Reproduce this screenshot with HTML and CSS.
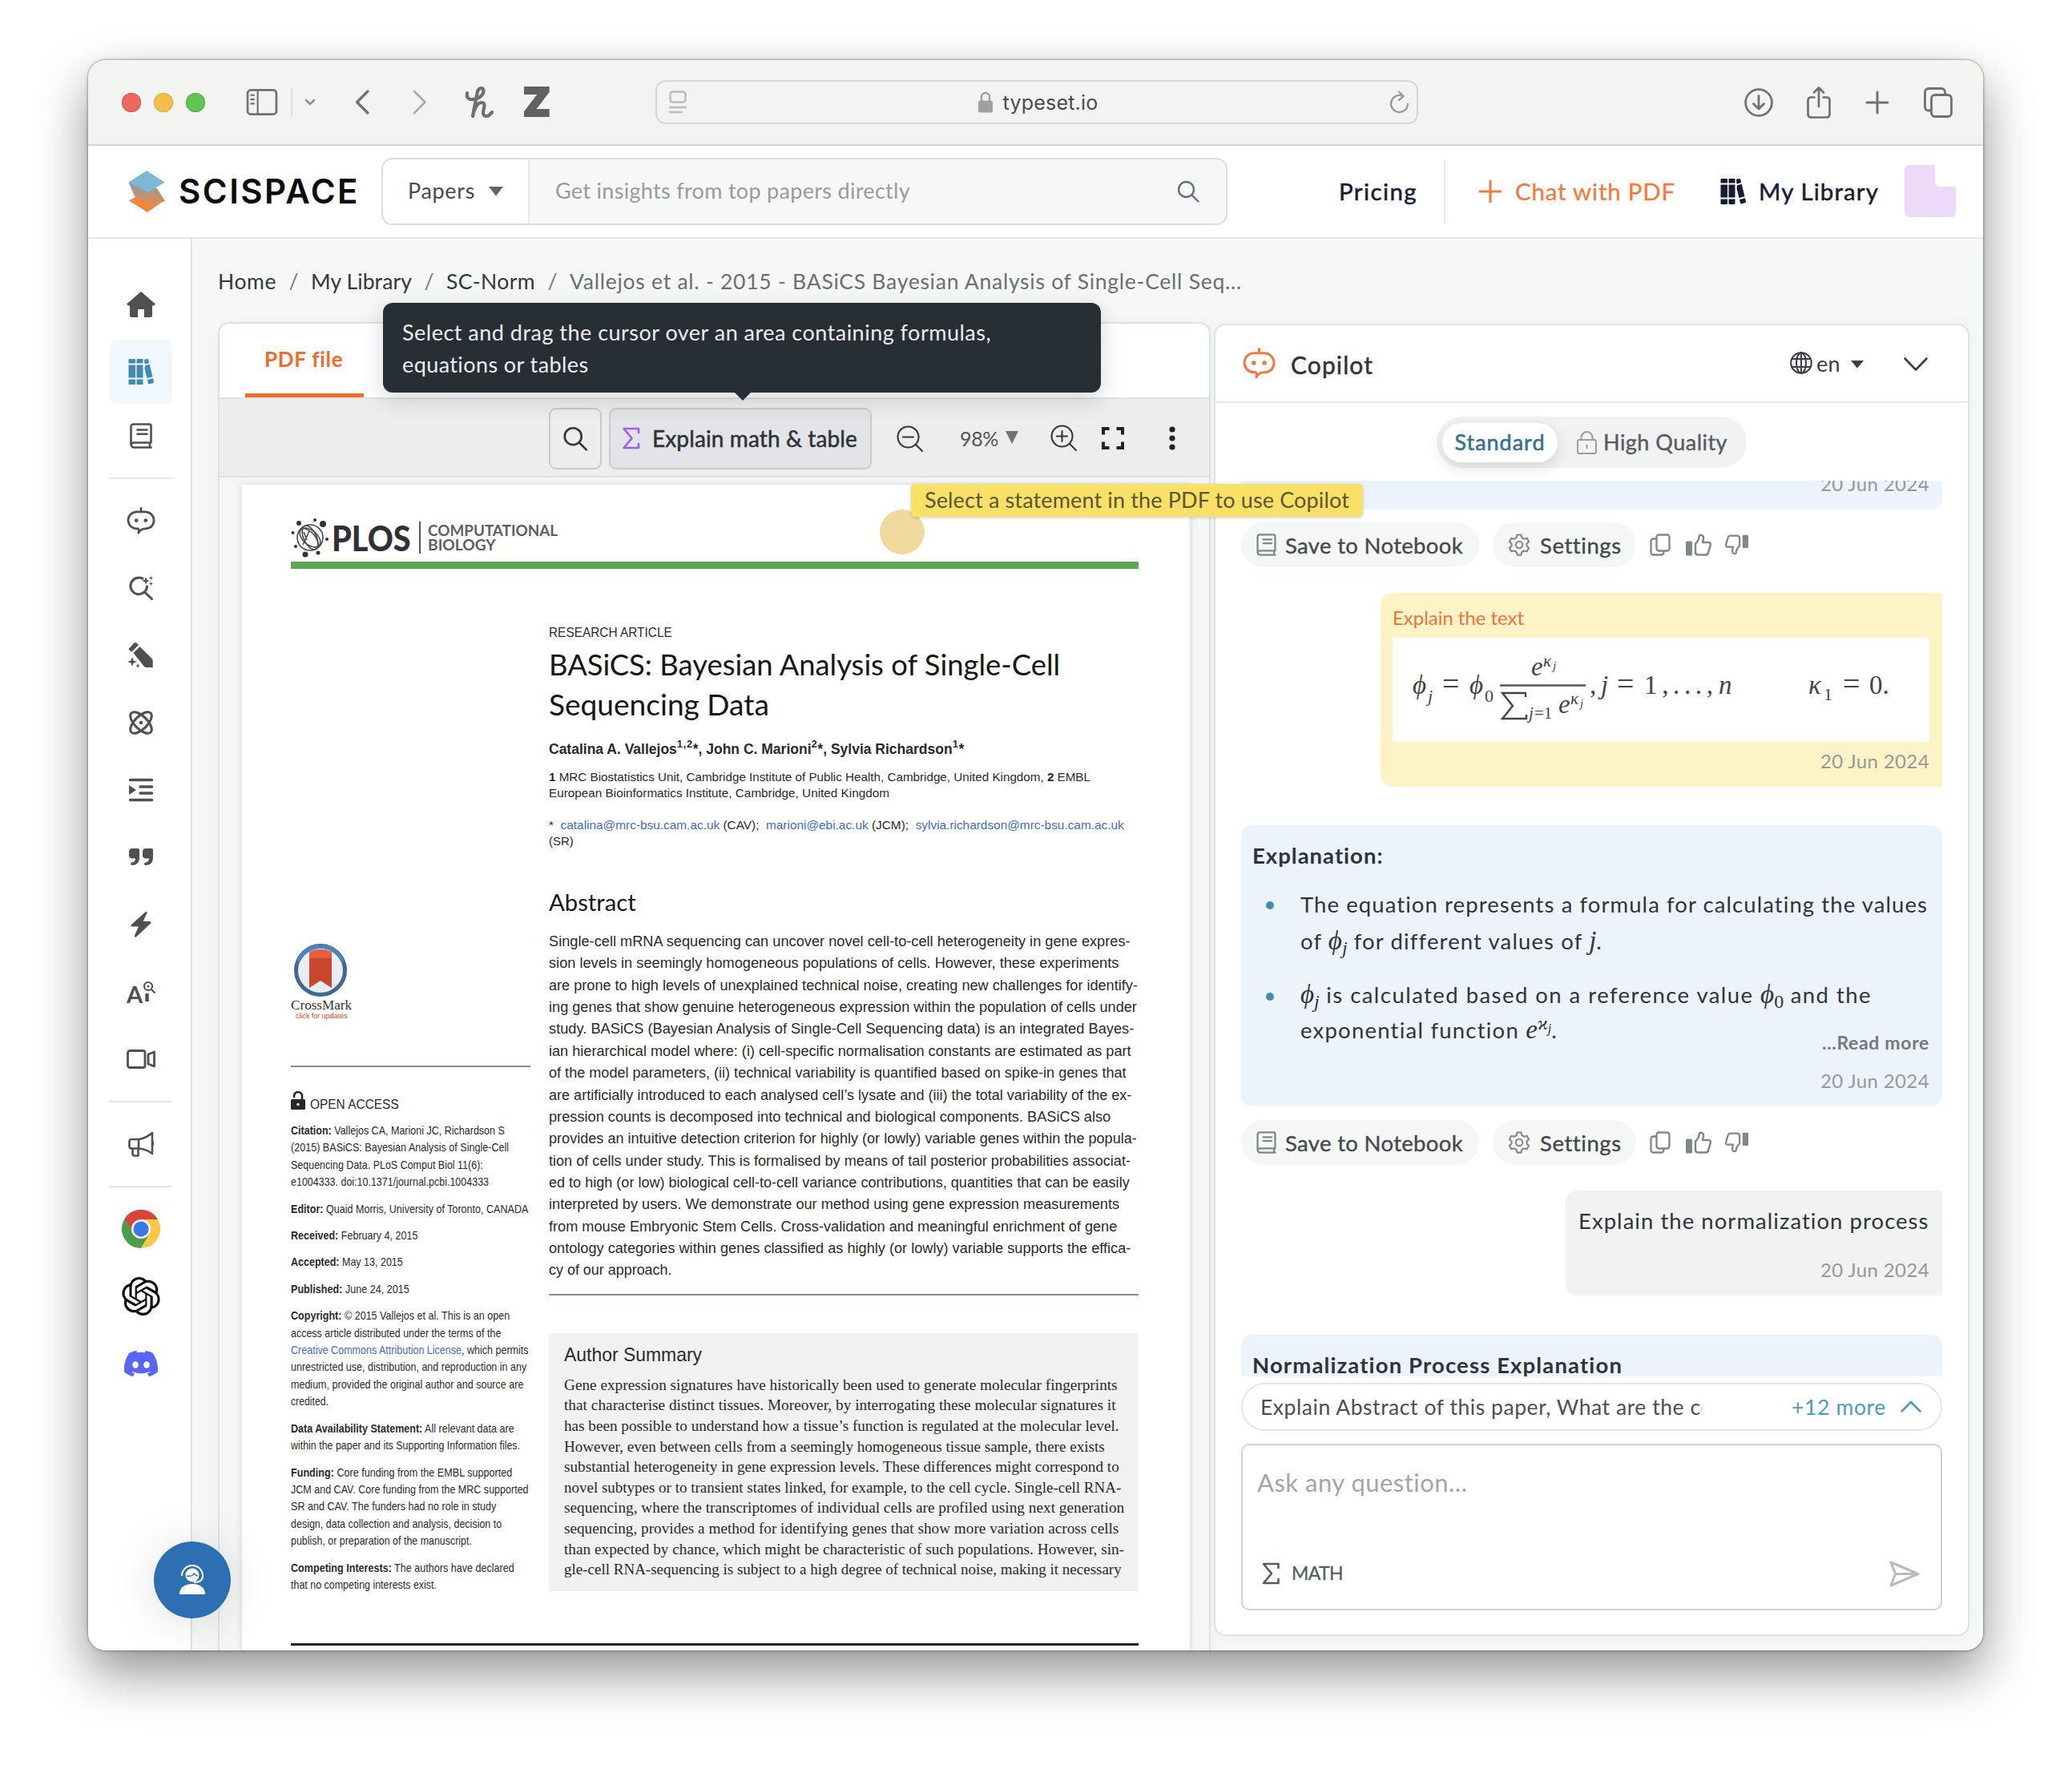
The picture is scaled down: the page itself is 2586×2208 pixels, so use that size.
FILE: index.html
```html
<!DOCTYPE html>
<html lang="en">
<head>
<meta charset="utf-8">
<title>SciSpace Copilot</title>
<link rel="stylesheet" href="styles.css">
</head>
<body>
<svg class="sprite" aria-hidden="true">
  <symbol id="i-search" viewBox="0 0 28 28"><g fill="none" stroke="currentColor" stroke-width="2.4" stroke-linecap="round"><circle cx="11.5" cy="11.5" r="9.5"/><path d="M18.5 18.5L26.5 26.5"/></g></symbol>
  <symbol id="i-books" viewBox="0 0 32 32"><g fill="currentColor"><path d="M1.500 0h6.500a1 1 0 0 1 1 1v4.500H.5V1a1 1 0 0 1 1-1zM.5 7.500H9v16H.5zM.5 25.500H9V31a1 1 0 0 1-1 1H1.500a1 1 0 0 1-1-1zM11.500 0h6a1 1 0 0 1 1 1v4.500h-8V1a1 1 0 0 1 1-1zM10.500 7.500h8v16h-8zM10.500 25.500h8V31a1 1 0 0 1-1 1h-6a1 1 0 0 1-1-1z"/><path d="M20 .8l3.800-.8a1.200 1.200 0 0 1 1.400.9l1 4-5.700 1.600zM21 8.300l5.700-1.500 3.800 15.400-7 1.900-3-12zM24 26l7-1.800 1 4.200a1.300 1.300 0 0 1-.9 1.500L26.500 31.500a1.200 1.200 0 0 1-1.500-.9z"/></g></symbol>
  <symbol id="i-note" viewBox="0 0 28 32"><g fill="none" stroke="currentColor" stroke-width="2.600" stroke-linejoin="round" stroke-linecap="round"><path d="M26.500 24.500V3.500a2 2 0 0 0-2-2H4.500a3 3 0 0 0-3 3v22a4 4 0 0 0 4 4h21M26 24.500H5a3 3 0 0 0-3.200 3M25 24.500v6M9.500 8.500h12M9.500 13.800h12"/></g></symbol>
  <symbol id="i-bot" viewBox="0 0 40 38"><g fill="none" stroke="currentColor" stroke-width="3" stroke-linejoin="round" stroke-linecap="round"><path d="M20 1.500v5M14 6.500h12a12 12 0 0 1 12 12c0 7-5 11.500-12 11.500-3 0-7 1-9.500 6 .6-2.500 1-4.500-.5-6H14A12 12 0 0 1 2 18.500a12 12 0 0 1 12-12z"/></g><g fill="currentColor"><circle cx="13.500" cy="18.500" r="2.700"/><circle cx="26.500" cy="18.500" r="2.700"/></g></symbol>
  <symbol id="i-gear" viewBox="0 0 28 28"><g fill="none" stroke="currentColor" stroke-width="2.100" stroke-linejoin="round"><path d="M11.600 1.500h4.800l1 3.600 2.700 1.600 3.600-.9 2.400 4.200-2.600 2.600v2.900l2.600 2.600-2.400 4.200-3.600-.9-2.700 1.600-1 3.600h-4.800l-1-3.600-2.700-1.600-3.600.9-2.400-4.200 2.600-2.600v-2.900L1.900 10l2.400-4.200 3.600.9 2.700-1.600z"/><circle cx="14" cy="14" r="4.200"/></g></symbol>
  <symbol id="i-copy" viewBox="0 0 26 28"><g fill="none" stroke="currentColor" stroke-width="2.300" stroke-linejoin="round"><rect x="8.500" y="1.500" width="16" height="20" rx="3"/><path d="M8.500 6.500h-4a3 3 0 0 0-3 3v14a3 3 0 0 0 3 3h10a3 3 0 0 0 3-3v-2"/></g></symbol>
  <symbol id="i-up" viewBox="0 0 32 28"><rect x="0" y="9.500" width="8" height="18" rx="1.500" fill="currentColor"/><path d="M12 12.500c4-3 4.500-6 5-10.200 2.500-1.500 5.500.2 5 4.200l-1 4.500h7.500c2 0 2.800 1.700 2.300 3.500l-3 10c-.5 1.500-1.500 2-3 2H16c-2 0-4-1-4-3z" fill="none" stroke="currentColor" stroke-width="2.500" stroke-linejoin="round"/></symbol>
  <symbol id="i-sigma" viewBox="0 0 24 28"><path d="M21 7V2H2.500l10 12L2.500 26H21v-5" fill="none" stroke="currentColor" stroke-width="2.600" stroke-linejoin="round" stroke-linecap="round"/></symbol>
</svg>

<div class="window">
  <div class="safari">
    <i class="light close"></i><i class="light minimise"></i><i class="light zoom"></i>
    <svg class="s-side" viewBox="0 0 40 34"><rect x="1.500" y="1.500" width="37" height="31" rx="4" fill="none" stroke="currentColor" stroke-width="2.800"/><path d="M14.500 1v32M5 8h5.500M5 13.500h5.500M5 19h5.500" stroke="currentColor" stroke-width="2.200"/></svg>
    <i class="s-div"></i>
    <svg class="s-chev" viewBox="0 0 14 9"><path d="M2 2l5 5 5-5" fill="none" stroke="currentColor" stroke-width="2.600" stroke-linecap="round" stroke-linejoin="round"/></svg>
    <svg class="s-back" viewBox="0 0 18 31"><path d="M16 2L2.500 15.500 16 29" fill="none" stroke="currentColor" stroke-width="3.200" stroke-linecap="round" stroke-linejoin="round"/></svg>
    <svg class="s-fwd" viewBox="0 0 18 31"><path d="M2 2l13.500 13.500L2 29" fill="none" stroke="currentColor" stroke-width="2.800" stroke-linecap="round" stroke-linejoin="round"/></svg>
    <svg class="s-honey" viewBox="0 0 35 39"><path d="M2 8c-1 6 2 9 8 8 8-1.500 13-6 12.500-11C22 1 17 1 15 6L9 37c2-10 6-17 11-17s3.500 5 2.500 9c-1.200 5 0 8 3.500 8 3 0 5-2 7-5" fill="none" stroke="currentColor" stroke-width="4.200" stroke-linecap="round" stroke-linejoin="round"/></svg>
    <span class="s-z">Z</span>
    <div class="address">
      <svg class="s-reader" viewBox="0 0 22 29"><rect x="1.500" y="1.500" width="19" height="13" rx="3" fill="none" stroke="currentColor" stroke-width="2.400"/><path d="M1 21h20M1 27h15" stroke="currentColor" stroke-width="2.400" stroke-linecap="round"/></svg>
      <svg class="s-lock" viewBox="0 0 18 27"><rect y="11.500" width="18" height="15" rx="2.500" fill="currentColor"/><path d="M4 12V7a5 5 0 0 1 10 0v5" fill="none" stroke="currentColor" stroke-width="2.400"/></svg>
      <span class="url" data-w="119">typeset.io</span>
      <svg class="s-reload" viewBox="0 0 24 29"><path d="M15.500 6.800A10.500 10.500 0 1 0 22 17M11 1.500l5.500 5.600-5.500 5" fill="none" stroke="currentColor" stroke-width="2.300" stroke-linecap="round" stroke-linejoin="round"/></svg>
    </div>
    <svg class="s-down" viewBox="0 0 36 36"><g fill="none" stroke="currentColor" stroke-width="2.700" stroke-linecap="round" stroke-linejoin="round"><circle cx="18" cy="18" r="16.400"/><path d="M18 9.500v16M11.500 19.500l6.500 6.500 6.500-6.500"/></g></svg>
    <svg class="s-share" viewBox="0 0 30 40"><g fill="none" stroke="currentColor" stroke-width="2.700" stroke-linecap="round" stroke-linejoin="round"><path d="M9.500 13.500H5a3.500 3.500 0 0 0-3.500 3.500v18A3.500 3.500 0 0 0 5 38.500h20a3.500 3.500 0 0 0 3.500-3.500V17a3.500 3.500 0 0 0-3.500-3.500h-4.500M15 25V2M9 7.500L15 1.500l6 6"/></g></svg>
    <svg class="s-plus" viewBox="0 0 28 28"><path d="M14 1v26M1 14h26" stroke="currentColor" stroke-width="2.900" stroke-linecap="round"/></svg>
    <svg class="s-tabs" viewBox="0 0 36 38"><g fill="none" stroke="currentColor" stroke-width="2.800" stroke-linejoin="round"><rect x="9.500" y="9.500" width="25" height="27" rx="4.500"/><path d="M26.500 9.500V6A4.500 4.500 0 0 0 22 1.500H6A4.500 4.500 0 0 0 1.500 6v18.500A4.500 4.500 0 0 0 6 29h3.500"/></g></svg>
  </div>

  <header class="topbar">
    <svg class="logo" viewBox="0 0 46 52"><defs><linearGradient id="lg" x1="0" y1="0" x2="0" y2="1"><stop offset="0" stop-color="#8a9da0"/><stop offset="1" stop-color="#e58a4c"/></linearGradient></defs><path d="M1 37.500L20 26l26 10.500L24 52z" fill="#f0863f"/><path d="M.5 14.500L36 22l10 16-15 5.500L8 32z" fill="url(#lg)"/><path d="M.5 14.500L23 0l22.500 14.500-21 13z" fill="#7db9d5"/></svg>
    <span class="brand" data-w="226">SCISPACE</span>
    <div class="search">
      <div class="scope"><span data-w="84">Papers</span><svg class="tri" viewBox="0 0 18 12"><path d="M0 0h18L9 11.500z" fill="currentColor"/></svg></div>
      <span class="hint" data-w="443">Get insights from top papers directly</span>
      <svg class="mag"><use href="#i-search"/></svg>
    </div>
    <span class="pricing" data-w="98">Pricing</span>
    <i class="t-div"></i>
    <svg class="cplus" viewBox="0 0 28 28"><path d="M14 0v28M0 14h28" stroke="currentColor" stroke-width="3"/></svg>
    <span class="cwp" data-w="200">Chat with PDF</span>
    <svg class="lib"><use href="#i-books"/></svg>
    <span class="mylib" data-w="150">My Library</span>
    <svg class="avatar" viewBox="0 0 64 65"><path d="M6 0h32v21a6 6 0 0 0 6 6h20v32a6 6 0 0 1-6 6H6a6 6 0 0 1-6-6V6a6 6 0 0 1 6-6z" fill="#edd9f8"/></svg>
  </header>

  <div class="body">
    <nav class="rail">
      <a><svg width="36" height="32" viewBox="0 0 36 32"><path d="M18 0L36 15.500 34 17.500H32V30a2 2 0 0 1-2 2h-8V22h-8v10H6a2 2 0 0 1-2-2V17.500H2L0 15.500z" fill="currentColor"/></svg></a>
      <a class="on"><b><svg width="32" height="32"><use href="#i-books"/></svg></b></a>
      <a class="nb"><svg width="28" height="32"><use href="#i-note"/></svg></a>
      <hr class="first">
      <a><svg width="36" height="34"><use href="#i-bot"/></svg></a>
      <a><svg width="30" height="30" viewBox="0 0 30 30"><path d="M17 3.200A10.300 10.300 0 1 0 22.500 13M19.500 20l9 8.500" fill="none" stroke="currentColor" stroke-width="3" stroke-linecap="round"/><path d="M21 1l1.300 3.700L26 6l-3.700 1.300L21 11l-1.300-3.700L16 6l3.700-1.300zM27.500 0l.7 1.800 1.800.7-1.800.7-.7 1.800-.7-1.800-1.800-.7 1.800-.7zM27.500 7l.7 1.800 1.800.7-1.800.7-.7 1.800-.7-1.800-1.800-.7 1.800-.7z" fill="currentColor"/></svg></a>
      <a><svg width="32" height="32" viewBox="0 0 32 32"><g fill="currentColor"><path d="M1 7.500L7 1a3 3 0 0 1 4 0l2 2-8.500 8.500L1.500 9.500a1.500 1.500 0 0 1-.5-2zM6.500 13l8-8L29.500 20a4 4 0 0 1 1.200 2.800V31h-7.500A4 4 0 0 1 20 30z"/><path d="M5 18l1.600 4.400L11 24l-4.400 1.600L5 30l-1.600-4.400L-1 24l4.400-1.600zM12 26l.8 2.200L15 29l-2.200.8L12 32l-.8-2.200L9 29l2.200-.8z"/></g></svg></a>
      <a><svg width="30" height="30" viewBox="0 0 30 30"><g fill="none" stroke="currentColor" stroke-width="3"><ellipse cx="15" cy="15" rx="17" ry="8" transform="rotate(45 15 15)"/><ellipse cx="15" cy="15" rx="17" ry="8" transform="rotate(-45 15 15)"/></g><circle cx="15" cy="15" r="2.300" fill="currentColor"/></svg></a>
      <a><svg width="30" height="30" viewBox="0 0 30 30"><path d="M1.500 2.500h27M14 11h14.500M14 19h14.500M1.500 27.500h27" stroke="currentColor" stroke-width="3.400" stroke-linecap="round"/><path d="M0 9l9 6-9 6z" fill="currentColor"/></svg></a>
      <a><svg width="30" height="22" viewBox="0 0 30 22"><g fill="currentColor"><path d="M4 0h7a2 2 0 0 1 2 2v9c0 7-4 10-9.500 10-1.500 0-2-3.300 0-3.500 3-.3 4.500-2 4.500-5H4a4 4 0 0 1-4-4V4a4 4 0 0 1 4-4z"/><path d="M21 0h7a2 2 0 0 1 2 2v9c0 7-4 10-9.500 10-1.500 0-2-3.300 0-3.500 3-.3 4.500-2 4.500-5h-4a4 4 0 0 1-4-4V4a4 4 0 0 1 4-4z"/></g></svg></a>
      <a><svg width="26" height="32" viewBox="0 0 26 32"><path d="M20.500 1.500L15.500 12H24c1.500 0 2 1.500 1 2.500L7.500 31c-1.500 1.500-3.200.3-2.500-1.500L10 18.500H2c-1.500 0-2-1.500-1-2.500L18 .7c1.500-1.300 3.200-.7 2.500.8z" fill="currentColor"/></svg></a>
      <a class="ai"><span>A</span><svg width="16" height="26" viewBox="0 0 16 26"><circle cx="7" cy="7" r="5" fill="none" stroke="currentColor" stroke-width="2.200"/><path d="M11 11l4.500 4.500" stroke="currentColor" stroke-width="2.200"/><circle cx="7" cy="7" r="1.500" fill="currentColor"/><path d="M5.500 16v10" stroke="currentColor" stroke-width="4.500"/></svg></a>
      <a><svg width="36" height="24" viewBox="0 0 36 24"><g fill="none" stroke="currentColor" stroke-width="2.800" stroke-linejoin="round"><rect x="1.500" y="1.500" width="21.500" height="21" rx="2.500"/><path d="M34.500 3v18l-7.500-3V6z"/></g></svg></a>
      <hr>
      <a><svg width="32" height="32" viewBox="0 0 32 32"><g fill="none" stroke="currentColor" stroke-width="2.600" stroke-linejoin="round"><path d="M30 2v26C24 23 19 22 13 21.500H4A2.500 2.500 0 0 1 1.500 19v-6.500A2.500 2.500 0 0 1 4 10h9C19 9.500 24 7 30 2zM13 10v11.500M5.500 21.500V28a2.500 2.500 0 0 0 2.500 2.500h4.500V21.500"/><path d="M30.700 12.500v5"/></g></svg></a>
      <hr>
      <a><svg width="48" height="48" viewBox="0 0 48 48"><path d="M24 24L3.200 12A24 24 0 0 1 44.800 12z" fill="#d8453a"/><path d="M44.800 12H24L34 30 24 48A24 24 0 0 0 44.800 12z" fill="#f6c748"/><path d="M3.200 12A24 24 0 0 0 24 48L34.400 30 24 24 13.600 30z" fill="#4a9c4f"/><path d="M3.200 12A24 24 0 0 1 44.800 12H24L13.600 18v12z" fill="#d8453a"/><path d="M3.200 12l10.400 18-3-9z" fill="#4a9c4f"/><circle cx="24" cy="24" r="12" fill="#fff"/><circle cx="24" cy="24" r="9.600" fill="#3c78e2"/></svg></a>
      <a class="dark"><svg width="48" height="48" viewBox="0 0 24 24"><path fill="currentColor" d="M22.2819 9.8211a5.9847 5.9847 0 0 0-.5157-4.9108 6.0462 6.0462 0 0 0-6.5098-2.9A6.0651 6.0651 0 0 0 4.9807 4.1818a5.9847 5.9847 0 0 0-3.9977 2.9 6.0462 6.0462 0 0 0 .7427 7.0966 5.98 5.98 0 0 0 .511 4.9107 6.051 6.051 0 0 0 6.5146 2.9001A5.9847 5.9847 0 0 0 13.2599 24a6.0557 6.0557 0 0 0 5.7718-4.2058 5.9894 5.9894 0 0 0 3.9977-2.9001 6.0557 6.0557 0 0 0-.7475-7.0729zm-9.022 12.6081a4.4755 4.4755 0 0 1-2.8764-1.0408l.1419-.0804 4.7783-2.7582a.7948.7948 0 0 0 .3927-.6813v-6.7369l2.02 1.1686a.071.071 0 0 1 .038.052v5.5826a4.504 4.504 0 0 1-4.4945 4.4944zm-9.6607-4.1254a4.4708 4.4708 0 0 1-.5346-3.0137l.142.0852 4.783 2.7582a.7712.7712 0 0 0 .7806 0l5.8428-3.3685v2.3324a.0804.0804 0 0 1-.0332.0615L9.74 19.9502a4.4992 4.4992 0 0 1-6.1408-1.6464zM2.3408 7.8956a4.485 4.485 0 0 1 2.3655-1.9728V11.6a.7664.7664 0 0 0 .3879.6765l5.8144 3.3543-2.0201 1.1685a.0757.0757 0 0 1-.071 0l-4.8303-2.7865A4.504 4.504 0 0 1 2.3408 7.872zm16.5963 3.8558L13.1038 8.364 15.1192 7.2a.0757.0757 0 0 1 .071 0l4.8303 2.7913a4.4944 4.4944 0 0 1-.6765 8.1042v-5.6772a.79.79 0 0 0-.407-.667zm2.0107-3.0231l-.142-.0852-4.7735-2.7818a.7759.7759 0 0 0-.7854 0L9.409 9.2297V6.8974a.0662.0662 0 0 1 .0284-.0615l4.8303-2.7866a4.4992 4.4992 0 0 1 6.6802 4.66zM8.3065 12.863l-2.02-1.1638a.0804.0804 0 0 1-.038-.0567V6.0742a4.4992 4.4992 0 0 1 7.3757-3.4537l-.142.0805L8.704 5.459a.7948.7948 0 0 0-.3927.6813zm1.0976-2.3654l2.602-1.4998 2.6069 1.4998v2.9994l-2.5974 1.4997-2.6067-1.4997Z"/></svg></a>
      <a class="discord"><svg width="42" height="42" viewBox="0 0 24 24"><path fill="currentColor" d="M20.317 4.3698a19.7913 19.7913 0 00-4.8851-1.5152.0741.0741 0 00-.0785.0371c-.211.3753-.4447.8648-.6083 1.2495-1.8447-.2762-3.68-.2762-5.4868 0-.1636-.3933-.4058-.8742-.6177-1.2495a.077.077 0 00-.0785-.037 19.7363 19.7363 0 00-4.8852 1.515.0699.0699 0 00-.0321.0277C.5334 9.0458-.319 13.5799.0992 18.0578a.0824.0824 0 00.0312.0561c2.0528 1.5076 4.0413 2.4228 5.9929 3.0294a.0777.0777 0 00.0842-.0276c.4616-.6304.8731-1.2952 1.226-1.9942a.076.076 0 00-.0416-.1057c-.6528-.2476-1.2743-.5495-1.8722-.8923a.077.077 0 01-.0076-.1277c.1258-.0943.2517-.1923.3718-.2914a.0743.0743 0 01.0776-.0105c3.9278 1.7933 8.18 1.7933 12.0614 0a.0739.0739 0 01.0785.0095c.1202.099.246.1981.3728.2924a.077.077 0 01-.0066.1276 12.2986 12.2986 0 01-1.873.8914.0766.0766 0 00-.0407.1067c.3604.698.7719 1.3628 1.225 1.9932a.076.076 0 00.0842.0286c1.961-.6067 3.9495-1.5219 6.0023-3.0294a.077.077 0 00.0313-.0552c.5004-5.177-.8382-9.6739-3.5485-13.6604a.061.061 0 00-.0312-.0286zM8.02 15.3312c-1.1825 0-2.1569-1.0857-2.1569-2.419 0-1.3332.9555-2.4189 2.157-2.4189 1.2108 0 2.1757 1.0952 2.1568 2.419 0 1.3332-.9555 2.4189-2.1569 2.4189zm7.9748 0c-1.1825 0-2.1569-1.0857-2.1569-2.419 0-1.3332.9554-2.4189 2.1569-2.4189 1.2108 0 2.1757 1.0952 2.1568 2.419 0 1.3332-.946 2.4189-2.1568 2.4189Z"/></svg></a>
    </nav>

    <main class="main">
      <div class="crumbs">
        <span data-w="73">Home</span><em>/</em><span data-w="126">My Library</span><em>/</em><span data-w="111">SC-Norm</span><em>/</em><span class="here" data-w="839">Vallejos et al. - 2015 - BASiCS Bayesian Analysis of Single-Cell Seq...</span>
      </div>
      <div class="panels">
        <section class="pdf">
          <div class="tabs"><span class="tab"><span data-w="98">PDF file</span></span></div>
          <div class="tools">
            <span class="btn find"><svg width="32" height="31"><use href="#i-search"/></svg></span>
            <span class="btn explain"><svg width="24" height="28"><use href="#i-sigma"/></svg><span data-w="256">Explain math &amp; table</span>
              <span class="tooltip"><span data-w="735">Select and drag the cursor over an area containing formulas,</span><br><span data-w="233">equations or tables</span></span>
            </span>
            <svg class="zo" viewBox="0 0 33 33"><g fill="none" stroke="currentColor" stroke-width="2.100" stroke-linecap="round"><circle cx="14.500" cy="14.500" r="13"/><path d="M24 24l8 8M8 14.500h13"/></g></svg>
            <span class="pct" data-w="48">98%</span>
            <svg class="ptri" viewBox="0 0 16 16"><path d="M0 0h16L8 16z" fill="currentColor"/></svg>
            <svg class="zi" viewBox="0 0 33 33"><g fill="none" stroke="currentColor" stroke-width="2.100" stroke-linecap="round"><circle cx="14.500" cy="14.500" r="13"/><path d="M24 24l8 8M8 14.500h13M14.500 8v13"/></g></svg>
            <svg class="fs" viewBox="0 0 28 28"><path d="M2 9.500V2h7.500M18.500 2H26v7.500M26 18.500V26h-7.500M9.500 26H2v-7.500" fill="none" stroke="currentColor" stroke-width="4"/></svg>
            <svg class="dots" viewBox="0 0 8 30"><g fill="currentColor"><circle cx="4" cy="4" r="3.600"/><circle cx="4" cy="15" r="3.600"/><circle cx="4" cy="26" r="3.600"/></g></svg>
          </div>
          <div class="canvas">
            <article class="page">
              <div class="plos">
                <svg width="50" height="50" viewBox="0 0 50 50"><g fill="none" stroke="#4a4b50" stroke-width="1.600"><circle cx="24" cy="25" r="16"/><ellipse cx="24" cy="25" rx="8" ry="16" transform="rotate(-25 24 25)"/><ellipse cx="24" cy="25" rx="15" ry="9" transform="rotate(40 24 25)"/><path d="M14 13c12 2 20 12 21 24M15 34l8-17M20 28l-4-10"/></g><g fill="#333"><circle cx="10" cy="7" r="3"/><circle cx="30" cy="3" r="2"/><circle cx="40" cy="8" r="4"/><circle cx="2.500" cy="19" r="2"/><circle cx="45" cy="27" r="2"/><circle cx="6" cy="36" r="2"/><circle cx="18" cy="46" r="3.500"/><circle cx="34" cy="44" r="2.500"/></g></svg>
                <span class="plos-w pl" data-w="99">PLOS</span><i></i>
                <div class="cb"><span class="pl" data-w="162">COMPUTATIONAL</span><span class="pl" data-w="85">BIOLOGY</span></div>
              </div>
              <div class="band"></div>
              <div class="cols">
                <aside>
                  <svg class="cm" viewBox="0 0 66 66"><circle cx="33" cy="33" r="30.500" fill="#e9edf1" stroke="#41688f" stroke-width="5"/><path d="M5 22A30.500 30.500 0 0 1 61 22" fill="none" stroke="#4b83c0" stroke-width="5"/><path d="M19 10q14-6 28 0v45L33 46 19 55z" fill="#c9452b"/><path d="M19 10q14-6 28 0v8H19z" fill="#e2603c"/></svg>
                  <span class="cmt pl" data-w="76">CrossMark</span>
                  <span class="cmu pl" data-w="65">click for updates</span>
                  <div class="rule"></div>
                  <div class="oa"><svg width="18" height="24" viewBox="0 0 18 24"><rect y="11" width="18" height="13" rx="1.500" fill="#26272c"/><path d="M4 9V7a5 5 0 0 1 10 0v5" fill="none" stroke="#26272c" stroke-width="2.600"/><circle cx="9" cy="17.500" r="1.800" fill="#ddd"/></svg><span class="pl" data-w="111">OPEN ACCESS</span></div>
                  <p><span class="pl" data-w="267"><b>Citation:</b> Vallejos CA, Marioni JC, Richardson S</span><span class="pl" data-w="272">(2015) BASiCS: Bayesian Analysis of Single-Cell</span><span class="pl" data-w="240">Sequencing Data. PLoS Comput Biol 11(6):</span><span class="pl" data-w="247">e1004333. doi:10.1371/journal.pcbi.1004333</span></p>
                  <p><span class="pl" data-w="296"><b>Editor:</b> Quaid Morris, University of Toronto, CANADA</span></p>
                  <p><span class="pl" data-w="158"><b>Received:</b> February 4, 2015</span></p>
                  <p><span class="pl" data-w="140"><b>Accepted:</b> May 13, 2015</span></p>
                  <p><span class="pl" data-w="148"><b>Published:</b> June 24, 2015</span></p>
                  <p><span class="pl" data-w="273"><b>Copyright:</b> © 2015 Vallejos et al. This is an open</span><span class="pl" data-w="262">access article distributed under the terms of the</span><span class="pl" data-w="297"><u>Creative Commons Attribution License</u>, which permits</span><span class="pl" data-w="294">unrestricted use, distribution, and reproduction in any</span><span class="pl" data-w="290">medium, provided the original author and source are</span><span class="pl" data-w="47">credited.</span></p>
                  <p><span class="pl" data-w="279"><b>Data Availability Statement:</b> All relevant data are</span><span class="pl" data-w="286">within the paper and its Supporting Information files.</span></p>
                  <p><span class="pl" data-w="276"><b>Funding:</b> Core funding from the EMBL supported</span><span class="pl" data-w="297">JCM and CAV. Core funding from the MRC supported</span><span class="pl" data-w="256">SR and CAV. The funders had no role in study</span><span class="pl" data-w="263">design, data collection and analysis, decision to</span><span class="pl" data-w="226">publish, or preparation of the manuscript.</span></p>
                  <p><span class="pl" data-w="279"><b>Competing Interests:</b> The authors have declared</span><span class="pl" data-w="182">that no competing interests exist.</span></p>
                </aside>
                <div class="text">
                  <div class="kind"><span class="pl" data-w="154">RESEARCH ARTICLE</span></div>
                  <h1><span class="pl" data-w="638">BASiCS: Bayesian Analysis of Single-Cell</span><span class="pl" data-w="275">Sequencing Data</span></h1>
                  <div class="authors"><span class="pl" data-w="518">Catalina A. Vallejos<sup>1,2</sup>*, John C. Marioni<sup>2</sup>*, Sylvia Richardson<sup>1</sup>*</span></div>
                  <div class="aff"><span class="pl" data-w="676"><b>1</b> MRC Biostatistics Unit, Cambridge Institute of Public Health, Cambridge, United Kingdom, <b>2</b> EMBL</span><span class="pl" data-w="425">European Bioinformatics Institute, Cambridge, United Kingdom</span></div>
                  <div class="corr"><span class="pl" data-w="718">*&nbsp; <u>catalina@mrc-bsu.cam.ac.uk</u> (CAV);&nbsp; <u>marioni@ebi.ac.uk</u> (JCM);&nbsp; <u>sylvia.richardson@mrc-bsu.cam.ac.uk</u></span><span class="pl" data-w="31">(SR)</span></div>
                  <h2><span class="pl" data-w="109">Abstract</span></h2>
                  <div class="abs"><span class="pl" data-w="726">Single-cell mRNA sequencing can uncover novel cell-to-cell heterogeneity in gene expres-</span><span class="pl" data-w="711">sion levels in seemingly homogeneous populations of cells. However, these experiments</span><span class="pl" data-w="735">are prone to high levels of unexplained technical noise, creating new challenges for identify-</span><span class="pl" data-w="734">ing genes that show genuine heterogeneous expression within the population of cells under</span><span class="pl" data-w="730">study. BASiCS (Bayesian Analysis of Single-Cell Sequencing data) is an integrated Bayes-</span><span class="pl" data-w="727">ian hierarchical model where: (i) cell-specific normalisation constants are estimated as part</span><span class="pl" data-w="721">of the model parameters, (ii) technical variability is quantified based on spike-in genes that</span><span class="pl" data-w="727">are artificially introduced to each analysed cell’s lysate and (iii) the total variability of the ex-</span><span class="pl" data-w="701">pression counts is decomposed into technical and biological components. BASiCS also</span><span class="pl" data-w="734">provides an intuitive detection criterion for highly (or lowly) variable genes within the popula-</span><span class="pl" data-w="726">tion of cells under study. This is formalised by means of tail posterior probabilities associat-</span><span class="pl" data-w="725">ed to high (or low) biological cell-to-cell variance contributions, quantities that can be easily</span><span class="pl" data-w="712">interpreted by users. We demonstrate our method using gene expression measurements</span><span class="pl" data-w="709">from mouse Embryonic Stem Cells. Cross-validation and meaningful enrichment of gene</span><span class="pl" data-w="726">ontology categories within genes classified as highly (or lowly) variable supports the effica-</span><span class="pl" data-w="154">cy of our approach.</span></div>
                  <div class="rule"></div>
                  <div class="summary">
                    <h3><span class="pl" data-w="172">Author Summary</span></h3>
                    <div class="ser"><span class="pl" data-w="691">Gene expression signatures have historically been used to generate molecular fingerprints</span><span class="pl" data-w="689">that characterise distinct tissues. Moreover, by interrogating these molecular signatures it</span><span class="pl" data-w="693">has been possible to understand how a tissue’s function is regulated at the molecular level.</span><span class="pl" data-w="675">However, even between cells from a seemingly homogeneous tissue sample, there exists</span><span class="pl" data-w="693">substantial heterogeneity in gene expression levels. These differences might correspond to</span><span class="pl" data-w="695">novel subtypes or to transient states linked, for example, to the cell cycle. Single-cell RNA-</span><span class="pl" data-w="699">sequencing, where the transcriptomes of individual cells are profiled using next generation</span><span class="pl" data-w="692">sequencing, provides a method for identifying genes that show more variation across cells</span><span class="pl" data-w="699">than expected by chance, which might be characteristic of such populations. However, sin-</span><span class="pl" data-w="696">gle-cell RNA-sequencing is subject to a high degree of technical noise, making it necessary</span></div>
                  </div>
                </div>
              </div>
              <div class="foot"></div>
            </article>
          </div>
        </section>

        <section class="copilot">
          <div class="c-head">
            <svg class="c-bot" width="43" height="39"><use href="#i-bot"/></svg>
            <span class="c-title" data-w="103">Copilot</span>
            <svg class="globe" viewBox="0 0 28 28"><g fill="none" stroke="currentColor" stroke-width="2.100"><circle cx="14" cy="14" r="12.800"/><ellipse cx="14" cy="14" rx="6" ry="12.800"/><path d="M14 1v26M2.500 9h23M2.500 19h23"/></g></svg>
            <span class="lang" data-w="30">en</span>
            <svg class="ltri" viewBox="0 0 16 10"><path d="M0 0h16L8 9.500z" fill="currentColor"/></svg>
            <svg class="lchev" viewBox="0 0 30 18"><path d="M1.500 1.500L15 15.500 28.500 1.500" fill="none" stroke="currentColor" stroke-width="2.600" stroke-linecap="round" stroke-linejoin="round"/></svg>
          </div>
          <div class="toggle">
            <span class="std"><span data-w="113">Standard</span></span>
            <svg width="25" height="29" viewBox="0 0 25 29"><g fill="none" stroke="#9a9ea3" stroke-width="2"><rect x="1" y="11" width="23" height="17" rx="2"/><path d="M5.500 11V8a7 7 0 0 1 14 0v3M12.500 17v5"/></g></svg>
            <span class="hq" data-w="155">High Quality</span>
          </div>
          <div class="chat">
            <div class="card blue cut"><span class="date" data-w="136">20 Jun 2024</span></div>
            <div class="acts"><span class="pill save"><svg width="25" height="28"><use href="#i-note"/></svg><span data-w="222">Save to Notebook</span></span><span class="pill set"><svg width="28" height="28"><use href="#i-gear"/></svg><span data-w="101">Settings</span></span><svg class="cp" width="26" height="28"><use href="#i-copy"/></svg><svg class="up" width="32" height="28"><use href="#i-up"/></svg><svg class="dn" width="29" height="26"><use href="#i-up"/></svg></div>
            <div class="card yellow">
              <span class="what" data-w="164">Explain the text</span>
              <svg class="eq" width="670" height="130" viewBox="1738 796 670 130">
                <g class="m"><text x="1763" y="866" class="i">ϕ</text><text x="1782" y="876" class="s i">j</text><text x="1800" y="866" class="eqs">=</text><text x="1834" y="866" class="i">ϕ</text><text x="1853" y="876" class="s">0</text>
                <text x="1911" y="843" class="i">e</text><text x="1926" y="832" class="x i">κ</text><text x="1938" y="836" class="xx i">j</text>
                <path d="M1872 855.500H1979" stroke="#555" stroke-width="2.500"/><path d="M1904 870v-5H1875l13 16-13 16h30v-5" fill="none" stroke="#444" stroke-width="2.400"/>
                <text x="1908" y="897" class="x i">j</text><text x="1915" y="897" class="x">=1</text><text x="1945" y="890" class="i">e</text><text x="1960" y="879" class="x i">κ</text><text x="1972" y="883" class="xx i">j</text>
                <text x="1984" y="866">,</text><text x="1998" y="866" class="i">j</text><text x="2018" y="866" class="eqs">=</text><text x="2052" y="866" textLength="86">1,...,</text><text x="2145" y="866" class="i">n</text>
                <text x="2257" y="866" class="i">κ</text><text x="2276" y="874" class="s">1</text><text x="2300" y="866" class="eqs">=</text><text x="2333" y="866">0.</text></g>
              </svg>
              <span class="date" data-w="136">20 Jun 2024</span>
            </div>
            <div class="card blue expl">
              <h4><span data-w="164">Explanation:</span></h4>
              <div class="li one"><i></i><span><span data-w="784">The equation represents a formula for calculating the values</span><br><span data-w="376">of <var>ϕ<sub>j</sub></var> for different values of <var>j</var>.</span></span></div>
              <div class="li two"><i></i><span><span data-w="713"><var>ϕ<sub>j</sub></var> is calculated based on a reference value <var>ϕ<sub class="up0">0</sub></var> and the</span><br><span data-w="322">exponential function <var>e<sup>ϰ<small>j</small></sup></var>.</span></span></div>
              <span class="more" data-w="134">...Read more</span>
              <span class="date" data-w="136">20 Jun 2024</span>
            </div>
            <div class="acts second"><span class="pill save"><svg width="25" height="28"><use href="#i-note"/></svg><span data-w="222">Save to Notebook</span></span><span class="pill set"><svg width="28" height="28"><use href="#i-gear"/></svg><span data-w="101">Settings</span></span><svg class="cp" width="26" height="28"><use href="#i-copy"/></svg><svg class="up" width="32" height="28"><use href="#i-up"/></svg><svg class="dn" width="29" height="26"><use href="#i-up"/></svg></div>
            <div class="card gray"><span class="q" data-w="438">Explain the normalization process</span><span class="date" data-w="136">20 Jun 2024</span></div>
            <div class="card blue norm"><h4><span data-w="463">Normalization Process Explanation</span></h4></div>
          </div>
          <div class="prompts"><div class="clip"><span data-w="565">Explain Abstract of this paper, What are the co</span></div><span class="plus12" data-w="118">+12 more</span><svg width="26" height="15" viewBox="0 0 26 15"><path d="M1.500 13.500L13 2l11.500 11.500" fill="none" stroke="currentColor" stroke-width="2.600" stroke-linecap="round" stroke-linejoin="round"/></svg></div>
          <div class="ask">
            <span class="ph" data-w="263">Ask any question...</span>
            <div class="ask-row"><svg width="25" height="28"><use href="#i-sigma"/></svg><span data-w="64">MATH</span><svg class="send" width="38" height="33" viewBox="0 0 38 33"><path d="M2 2l34 14.500L2 31l5.500-14.500zM7.500 16.500H35" fill="none" stroke="currentColor" stroke-width="3" stroke-linejoin="round"/></svg></div>
          </div>
        </section>
      </div>
    </main>
  </div>
  <div class="cursor"></div>
  <div class="hint-tag"><span data-w="530">Select a statement in the PDF to use Copilot</span></div>
  <div class="help"><svg width="34" height="38" viewBox="0 0 34 38"><g fill="#fff"><path d="M1 37c0-9 7-13 16-13s16 4 16 13z"/><circle cx="17" cy="13" r="8.500"/></g><path d="M4 14a13 13 0 0 1 26 0c0 5-4 8-11 8" fill="none" stroke="#fff" stroke-width="2"/><path d="M10 14c5 1 8-1 9-3 2 2 3 3 5 3" stroke="#2d6fb0" stroke-width="1.500" fill="none"/></svg></div>
</div>
<script src="fit.js"></script>
</body>
</html>
```
FILE: styles.css
```css
* { box-sizing: border-box; }
body { margin: 0; width: 2586px; height: 2208px; overflow: hidden; background: #fff; padding: 75px 110px; font-family: Lato, "Open Sans", sans-serif; color: #3b4045; font-size: 27px; line-height: 1.2; }
svg { display: block; flex: none; overflow: visible; }
i { font-style: normal; }
u { text-decoration: none; color: #3f6cc0; }
h1, h2, h3, h4, p { margin: 0; font-weight: 400; }
.sprite { position: absolute; width: 0; height: 0; }
[data-w] { display: inline-block; white-space: nowrap; flex: none; }
.pl { display: block; width: max-content; transform-origin: 0 50%; }

.window { position: relative; width: 2365px; height: 1985px; border-radius: 22px; box-shadow: 0 0 0 1.500px rgba(0,0,0,.16), 0 0 6px rgba(0,0,0,.15), 0 28px 64px rgba(0,0,0,.43); }
.safari { display: flex; align-items: center; height: 107px; padding-left: 42px; background: #f3f3f1; border-bottom: 2px solid #d5d5d4; border-radius: 22px 22px 0 0; color: #70706f; }
.light { width: 24px; height: 24px; border-radius: 50%; margin-right: 16px; flex: none; }
.close { background: #ec695f; box-shadow: inset 0 0 0 1px #d9574e; }
.minimise { background: #f4be4f; box-shadow: inset 0 0 0 1px #dca73d; }
.zoom { background: #61c453; box-shadow: inset 0 0 0 1px #4fae42; }
.s-side { width: 40px; height: 33px; margin-left: 35px; }
.s-div { width: 1.500px; height: 36px; background: #dededc; margin-left: 16px; }
.s-chev { width: 14px; height: 9px; margin-left: 15px; color: #8e8e8d; }
.s-back { width: 18px; height: 31px; margin-left: 49px; }
.s-fwd { width: 18px; height: 31px; margin-left: 54px; color: #acacab; }
.s-honey { width: 35px; height: 39px; margin-left: 48px; }
.s-z { width: 28px; margin-left: 41px; font: 900 50px/39px Inter, sans-serif; color: #616160; -webkit-text-stroke: 2px #616160; text-indent: -4px; flex: none; }
.address { display: flex; align-items: center; width: 952px; height: 55px; margin-left: 133px; border: 2px solid #d6d6d4; border-radius: 13px; padding-left: 15px; flex: none; }
.s-reader { width: 22px; height: 29px; color: #bababa; }
.s-lock { width: 18px; height: 27px; margin-left: 364px; color: #a0a09f; }
.url { margin-left: 13px; color: #4b4b4b; font-family: Inter, sans-serif; font-size: 25px; }
.s-reload { width: 24px; height: 29px; margin-left: 364px; color: #999; }
.s-down { width: 36px; height: 36px; margin-left: 407px; }
.s-share { width: 30px; height: 40px; margin-left: 42px; }
.s-plus { width: 28px; height: 28px; margin-left: 44px; }
.s-tabs { width: 36px; height: 38px; margin-left: 44px; }

.topbar { display: flex; align-items: center; height: 116px; background: #fff; border-bottom: 2px solid #e6e8ea; padding: 0 0 1px 50px; color: #161d33; font-size: 29.500px; }
.logo { width: 46px; height: 52px; }
.brand { margin-left: 17px; font: 600 42px/52px Inter, sans-serif; color: #0b0b0c; }
.search { display: flex; align-items: center; width: 1056px; height: 84px; margin-left: 27px; border: 2px solid #dadfe4; border-radius: 14px; background: #f6f8f8; overflow: hidden; flex: none; font-size: 27px; }
.scope { display: flex; align-items: center; width: 183px; height: 100%; padding-left: 31px; background: #fff; border-right: 2px solid #e3e6ea; color: #454a52; }
.tri { width: 18px; height: 12px; margin-left: 17px; color: #5c656c; }
.hint { margin-left: 32px; color: #989b9c; }
.mag { width: 28px; height: 28px; margin-left: 333px; color: #667080; }
.pricing { margin-left: 139px; -webkit-text-stroke: .5px; }
.t-div { width: 2px; height: 80px; margin-left: 33px; background: #e8e9ee; }
.cplus { width: 28px; height: 28px; margin-left: 42px; color: #f37a3c; }
.cwp { margin-left: 17px; color: #f37a3c; -webkit-text-stroke: .3px; }
.lib { width: 32px; height: 32px; margin-left: 56px; }
.mylib { margin-left: 16px; -webkit-text-stroke: .5px; }
.avatar { width: 64px; height: 65px; margin-left: 32px; }

.body { display: flex; height: 1762px; overflow: hidden; border-radius: 0 0 22px 22px; background: #f6f8f8; }
.rail { width: 130px; flex: none; background: #fff; border-right: 2px solid #dfe2e4; padding-top: 40px; color: #505050; }
.rail a { display: flex; align-items: center; justify-content: center; height: 84px; padding-left: 4px; }
.rail .on b { display: flex; align-items: center; justify-content: center; width: 78px; height: 80px; border-radius: 10px; background: #eff7ff; color: #4489ae; margin-left: -1px; }
.rail .nb { padding-bottom: 8px; }
.rail hr { width: 78px; margin: 10px 0 10px 26px; border: 0; height: 2px; background: #e2e3e5; }
.rail hr.first { margin: 6px 0 10px 26px; }
.rail .dark { color: #0a0a0a; }
.rail .discord { color: #5865f2; }
.ai span { font: 700 29px/30px Lato, sans-serif; margin-top: 6px; }
.ai svg { margin-top: -2px; }

.main { flex: none; width: 2235px; padding-left: 32px; }
.crumbs { display: flex; align-items: center; height: 104px; padding-top: 3px; font-size: 26.500px; color: #34373a; }
.crumbs em { font-style: normal; width: 43px; text-align: center; color: #777; }
.crumbs .here { color: #6c6f71; }
.panels { display: flex; align-items: flex-start; gap: 4px; }
.pdf { width: 1239px; height: 1700px; flex: none; border: 2px solid #dce2e6; border-radius: 14px 14px 0 0; background: #fff; box-shadow: 0 0 24px rgba(0,0,0,.03); }
.tabs { height: 94px; border-bottom: 2px solid #dfe1e2; padding-left: 32px; }
.tab { display: block; width: 148px; height: 92px; border-bottom: 5px solid #ee6c2c; padding: 26px 0 0 24px; color: #ee6c2c; font-weight: 700; font-size: 26px; line-height: 36px; }
.tools { display: flex; align-items: center; height: 98px; background: #eceeee; border-bottom: 2px solid #dcdede; padding: 2px 0 0 411px; color: #35383b; position: relative; z-index: 3; }
.btn { display: flex; align-items: center; height: 77px; border: 2px solid #c9cbcd; border-radius: 9px; flex: none; }
.find { width: 66px; justify-content: center; }
.explain { position: relative; width: 328px; margin-left: 9px; padding-left: 14px; background: #e3e4e7; color: #9d5cf5; font-size: 28px; }
.explain > span[data-w] { margin: 2px 0 0 14px; color: #2e3135; -webkit-text-stroke: .5px; }
.tooltip { position: absolute; left: -284px; top: -133px; width: 896px; height: 112px; padding: 17px 0 0 24px; border-radius: 12px; background: #272e34; color: #eceeef; font-size: 27px; line-height: 40px; box-shadow: 0 8px 30px rgba(0,0,0,.16); -webkit-text-stroke: 0; }
.tooltip::after { content: ""; position: absolute; left: 438px; top: 111px; border: 11px solid transparent; border-top-color: #272e34; border-bottom: 0; }
.zo { width: 33px; height: 33px; margin-left: 31px; }
.pct { margin-left: 46px; font-size: 25px; color: #505356; }
.ptri { width: 16px; height: 16px; margin-left: 9px; color: #707476; margin-top: -2px; }
.zi { width: 33px; height: 33px; margin-left: 40px; margin-top: -2px; }
.fs { width: 28px; height: 28px; margin-left: 31px; color: #222; }
.dots { width: 8px; height: 30px; margin-left: 56px; color: #222; }
.canvas { background: #f5f7f7; height: 1510px; padding: 9px 0 0 28px; }
.page { width: 1183px; height: 1500px; background: #fff; padding: 41px 0 0 61px; box-shadow: 0 0 9px rgba(0,0,0,.13); font-family: "Liberation Sans", Arial, sans-serif; color: #2a2a2a; }
.plos { display: flex; align-items: center; height: 50px; margin-bottom: 5px; }
.plos-w { font: 900 44px/50px Lato, sans-serif; color: #303136; margin-left: 1px; width: 99px; }
.plos i { width: 2px; height: 40px; background: #555; margin-left: 10px; }
.cb { margin-left: 9px; font: 700 18.500px/18px Lato, sans-serif; color: #5d5f64; }
.band { background: #5ba953; height: 9px; width: 1058px; }
.cols { display: flex; height: 1341px; }
aside { width: 299px; flex: none; margin-right: 23px; font-size: 14.300px; line-height: 21.400px; padding-top: 468px; }
aside p { margin-bottom: 12px; }
.cm { width: 66px; height: 66px; margin-left: 4px; }
.cmt { font: 16px/16px "Liberation Serif", serif; margin-top: 3px; color: #333; }
.cmu { font-size: 9.500px; line-height: 10px; margin-left: 6px; color: #d4472c; }
.rule { height: 2px; background: #849092; }
aside .rule { margin-top: 57px; }
.oa { display: flex; align-items: flex-start; gap: 6px; height: 69px; padding-top: 29px; font-size: 16px; line-height: 30px; }
.oa .pl { margin-top: 3px; }
.text { width: 736px; padding-top: 69px; }
.kind { font-size: 16.500px; line-height: 20px; }
h1 { font: 400 36px/50px Lato, sans-serif; margin-top: 5px; color: #161616; }
.authors { font-size: 17.500px; line-height: 22px; font-weight: 700; margin-top: 20px; }
.authors sup { font-size: 13px; line-height: 0; vertical-align: 8px; letter-spacing: .6px; }
.aff { font-size: 15px; line-height: 20.500px; margin-top: 13.500px; }
.corr { font-size: 15px; line-height: 19.500px; margin-top: 19.500px; }
h2 { font: 400 29px/34px Lato, sans-serif; margin-top: 50px; color: #161616; }
.abs { font-size: 18.300px; line-height: 27.360px; margin-top: 18px; }
.text .rule { margin-top: 16px; }
.summary { margin-top: 47px; height: 322px; background: #f1f1f1; padding: 12px 0 0 19px; }
h3 { font-size: 24px; line-height: 30px; }
.ser { margin-top: 10px; font: 19.500px/25.600px "Liberation Serif", "Times New Roman", serif; }
.foot { height: 3px; width: 1058px; background: #222; }

.copilot { width: 943px; height: 1638px; margin-top: 2px; flex: none; border: 2px solid #dce2e6; border-radius: 14px; background: #fff; overflow: hidden; box-shadow: 0 0 24px rgba(0,0,0,.03); }
.c-head { display: flex; align-items: center; height: 97px; border-bottom: 2px solid #e6e8e9; padding: 2px 0 0 33px; }
.c-bot { color: #ef7a43; margin-top: -3px; }
.c-title { margin-left: 18px; font-size: 30px; color: #2f3236; -webkit-text-stroke: .5px; }
.globe { width: 28px; height: 28px; margin-left: 520px; margin-top: -3px; }
.lang { margin-left: 5px; font-size: 27px; }
.ltri { width: 16px; height: 10px; margin-left: 13px; }
.lchev { width: 30px; height: 18px; margin-left: 50px; }
.toggle { display: flex; align-items: center; width: 387px; height: 64px; margin: 17px 0 16px 276px; padding-left: 7px; border-radius: 32px; background: #f1f3f3; font-size: 27px; }
.std { display: flex; align-items: center; justify-content: center; width: 144px; height: 49px; margin-right: 24px; border-radius: 25px; background: #fff; color: #37718f; box-shadow: 0 6px 20px rgba(0,0,0,.13); -webkit-text-stroke: .6px; }
.hq { margin-left: 8px; color: #565b64; -webkit-text-stroke: .4px; }
.chat { height: 1118px; overflow: hidden; padding: 0 32px; color: #303439; font-size: 27.500px; }
.card { display: flow-root; }
.blue { background: #ecf3fa; border-radius: 14px; }
.date { display: block; width: max-content; margin: 0 16px 0 auto; font-size: 24px; line-height: 30px; color: #95999c; }
.cut { height: 36px; border-radius: 0 0 14px 14px; }
.cut .date { margin-top: -11px; }
.acts { display: flex; align-items: center; height: 56px; margin-top: 16px; color: #7f868c; }
.acts.second { margin-top: 17px; }
.pill { display: flex; align-items: center; height: 56px; border-radius: 28px; background: #f5f7f7; margin-right: 17px; }
.pill span { color: #43484d; -webkit-text-stroke: .35px; }
.save { width: 297px; padding-left: 19px; gap: 11px; }
.set { width: 179px; padding-left: 19px; gap: 12px; }
.up { margin-left: 19px; }
.dn { margin-left: 17px; transform: rotate(180deg); }
.yellow { width: 701px; height: 242px; margin: 32px 0 0 auto; padding-left: 15px; border-radius: 14px 0 0 14px; background: #fdf3c7; }
.what { display: block; width: max-content; margin-top: 16px; font-size: 24px; line-height: 30px; color: #f0733d; }
.eq { background: #fff; margin-top: 10px; }
.yellow .date { margin-top: 9px; }
.m { font: 33px "Liberation Serif", serif; fill: #444; }
.m .i { font-style: italic; }
.m .eqs { font-size: 38px; }
.m .s { font-size: 22px; }
.m .x { font-size: 21px; }
.m .xx { font-size: 15px; }
.expl { height: 351px; margin-top: 48px; }
h4 { font-weight: 700; font-size: 27.500px; line-height: 36px; color: #2c333f; padding: 20px 0 0 14px; }
.li { display: flex; line-height: 46px; }
.li i { width: 10px; height: 10px; border-radius: 50%; background: #418cb1; margin: 19px 33px 0 31px; flex: none; }
.one { margin-top: 20px; }
.two { margin-top: 22px; line-height: 44px; }
var { font: italic 33px/0 "Liberation Serif", serif; letter-spacing: 0; }
var sub { font-size: 24px; line-height: 0; vertical-align: -6px; }
var .up0 { font-style: normal; }
var sup { font-size: 23px; line-height: 0; vertical-align: 11px; }
var small { font-size: 16px; vertical-align: -4px; }
.more { display: block; width: max-content; margin: -22px 16px 0 auto; font-size: 23px; line-height: 30px; font-weight: 700; color: #74797e; }
.expl .date { margin-top: 18px; }
.gray { width: 470px; height: 131px; margin: 32px 0 0 auto; border-radius: 14px 0 0 14px; background: #f1f3f3; }
.q { display: block; width: max-content; margin: 20px 0 0 16px; line-height: 36px; }
.gray .date { margin-top: 28px; }
.norm { height: 80px; margin-top: 49px; border-radius: 14px 14px 0 0; }
.norm h4 { padding-top: 20px; }
.prompts { display: flex; align-items: center; height: 60px; margin: 8px 32px 0; border: 2px solid #e5e6e7; border-radius: 30px; font-size: 26.500px; color: #4c4f52; padding: 2px 0 0 22px; }
.clip { width: 551px; overflow: hidden; flex: none; }
.plus12 { margin-left: 112px; color: #5199bf; }
.prompts svg { margin: -3px 0 0 18px; color: #5199bf; }
.ask { height: 208px; margin: 16px 32px 0; border: 2px solid #d0d2d3; border-radius: 10px; padding: 26px 0 0 18px; }
.ph { display: block; width: max-content; font-size: 31px; line-height: 40px; color: #a2a6a9; }
.ask-row { display: flex; align-items: center; height: 34px; margin-top: 77px; padding-left: 5px; color: #555d62; font-size: 23px; }
.ask-row span { margin-left: 13px; -webkit-text-stroke: .3px; }
.send { margin-left: 682px; color: #b9bcbe; }

.cursor { position: absolute; left: 988px; top: 561px; width: 56px; height: 56px; border-radius: 50%; background: #f0d99c; z-index: 4; }
.hint-tag { position: absolute; left: 1027px; top: 529px; width: 564px; height: 41px; padding-left: 17px; border-radius: 5px; background: #f9e067; color: #5b5633; font-size: 27px; line-height: 40px; box-shadow: 0 1px 4px rgba(0,0,0,.2); z-index: 5; }
.help { position: absolute; left: 82px; top: 1849px; width: 96px; height: 96px; border-radius: 50%; background: #2d6fb0; display: flex; align-items: center; justify-content: center; box-shadow: 0 4px 60px rgba(0,0,0,.13); }
```
FILE: fit.js
```js
// Sets each run of text to its measured width: PDF text lines are scaled
// horizontally, interface labels are tracked (inline maths keeps its own spacing).
document.querySelectorAll('[data-w]').forEach(function (el) {
  var want = parseFloat(el.dataset.w);
  if (el.classList.contains('pl')) {
    el.style.width = 'max-content';
    el.style.transform = 'scaleX(' + want / el.offsetWidth + ')';
    el.style.marginRight = (want - el.offsetWidth) + 'px';
  } else {
    var count = el.textContent.length;
    el.querySelectorAll('var').forEach(function (v) { count -= v.textContent.length; });
    el.style.letterSpacing = (want - el.getBoundingClientRect().width) / count + 'px';
  }
});
```
